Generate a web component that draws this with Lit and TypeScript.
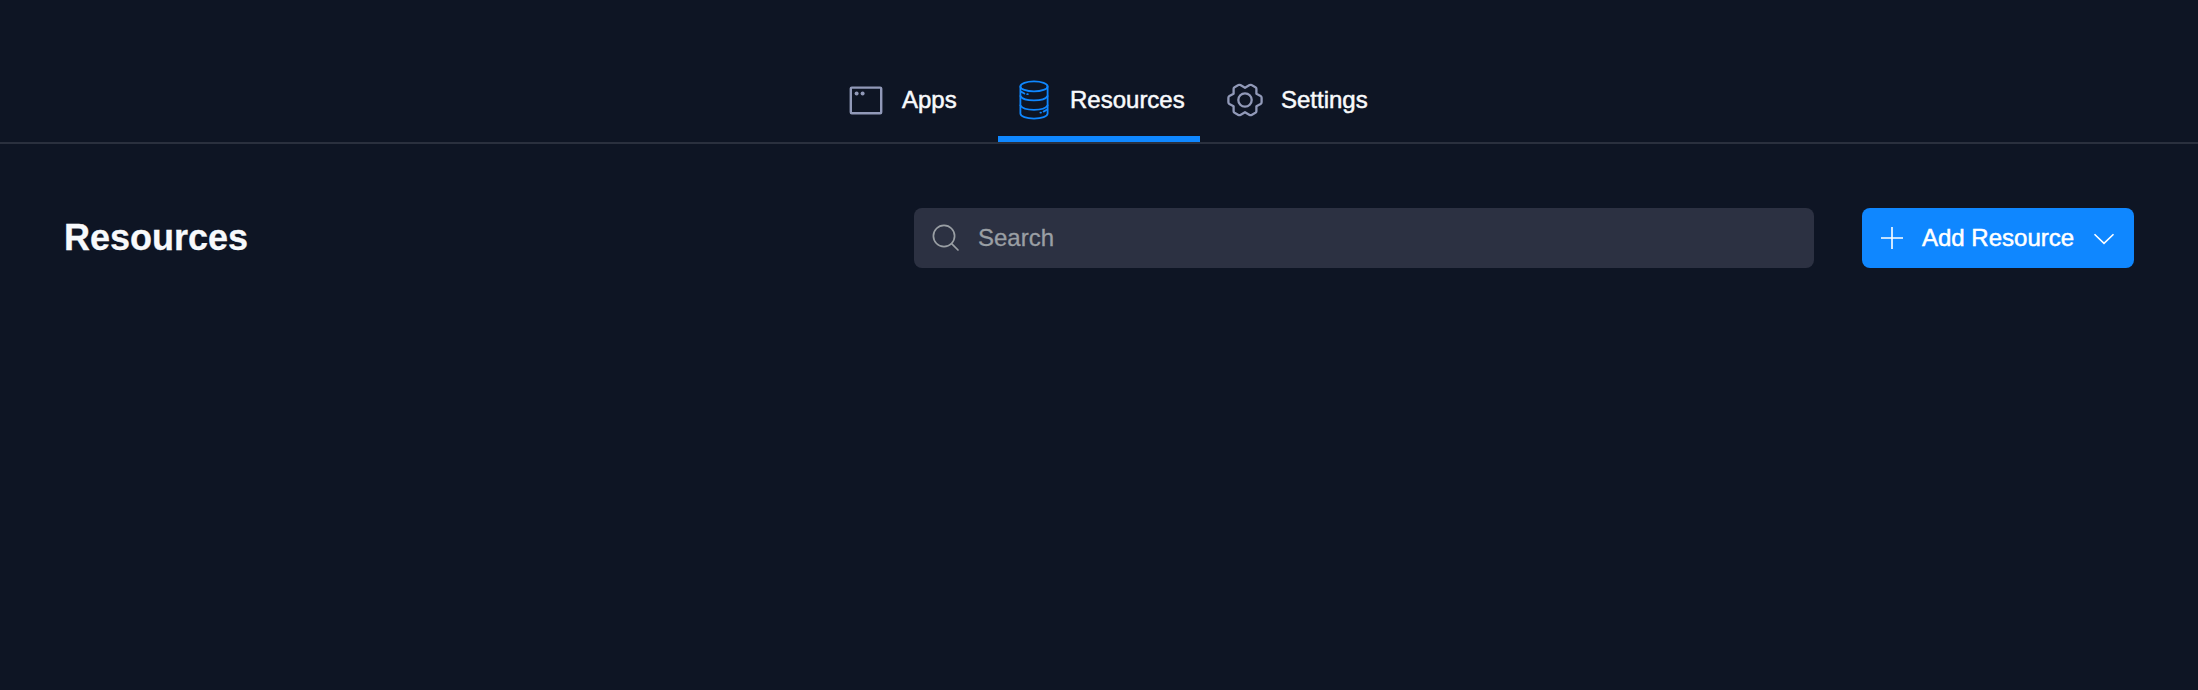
import { LitElement, html, css } from "lit";
import { customElement } from "lit/decorators.js";

const appsIcon = html`<svg width="34" height="29" viewBox="0 0 34 29" fill="none">
  <rect x="1.8" y="1.6" width="30.4" height="25.6" rx="1" stroke="currentColor" stroke-width="2.4"/>
  <circle cx="7.6" cy="7.6" r="2" fill="currentColor"/><circle cx="13.6" cy="7.6" r="2" fill="currentColor"/>
</svg>`;

const resourcesIcon = html`<svg width="30" height="40" viewBox="0 0 30 40" fill="none" stroke="currentColor" stroke-width="1.8" stroke-linecap="round">
  <ellipse cx="15" cy="6.4" rx="13.6" ry="5"/>
  <path d="M1.4 6.4V33.5C1.4 36.5 7.4 38.6 15 38.6S28.6 36.5 28.6 33.5V6.4"/>
  <path d="M1.4 16C3 18.8 8.5 20.4 15 20.4S27 18.8 28.6 16"/>
  <path d="M1.4 25.4C3 28.2 8.5 29.8 15 29.8S27 28.2 28.6 25.4"/>
  <path d="M2 11.6L5.4 13.5M8.2 14.2H8.8M28.2 29.5L24.6 31.6M22 32.6H21.4"/>
</svg>`;

const settingsIcon = html`<svg width="36" height="34" viewBox="0 0 36 34" fill="none" stroke="currentColor" stroke-width="2.3" stroke-linejoin="round">
  <path d="M18 4.8L22.6 2.1Q23.6 1.5 24.6 2.1L28.4 4.2Q29.4 4.8 29.4 5.8V10.8L33.6 13Q34.6 13.6 34.6 14.8V19.2Q34.6 20.4 33.6 21L29.4 23.2V28.2Q29.4 29.2 28.4 29.8L24.6 31.9Q23.6 32.5 22.6 31.9L18 29.2L13.4 31.9Q12.4 32.5 11.4 31.9L7.6 29.8Q6.6 29.2 6.6 28.2V23.2L2.4 21Q1.4 20.4 1.4 19.2V14.8Q1.4 13.6 2.4 13L6.6 10.8V5.8Q6.6 4.8 7.6 4.2L11.4 2.1Q12.4 1.5 13.4 2.1Z"/>
  <circle cx="18" cy="17" r="6.7"/>
</svg>`;

@customElement("app-root")
export class AppRoot extends LitElement {
  static styles = css`
    :host { display: block; min-height: 690px; background: #0e1524;
      color: #f8fafc; font: 24px/30px "Liberation Sans", Arial, sans-serif; }
    * { box-sizing: border-box; }
    svg { display: block; flex: none; }
    .nav { display: flex; height: 144px; padding: 56px 0 0 829px; border-bottom: 2px solid #2a303e; }
    .tab { display: flex; align-items: center; height: 86px; padding-top: 8px; border-bottom: 6px solid transparent; color: #9199b8; }
    .tab span { color: #f8fafc; }
    .apps { width: 169px; padding-left: 20px; }
    .apps span { margin-left: 19px; }
    .active { width: 202px; padding-left: 21px; border-color: #0f87ff; color: #0f87ff; }
    .active span { margin-left: 21px; }
    .settings { padding-left: 27px; }
    .settings span { margin-left: 18px; }
    .label { -webkit-text-stroke: 0.5px currentColor; }
    .bar { display: flex; align-items: center; padding: 64px 64px 0; }
    h1 { margin: 0; width: 850px; font-size: 36px; line-height: 44px; font-weight: 700; -webkit-text-stroke: 0.3px currentColor; }
    .search { display: flex; align-items: center; width: 900px; height: 60px; padding-left: 18px; gap: 18px;
      border-radius: 8px; background: #2c3142; color: #9a9fa4; }
    .search span { -webkit-text-stroke: 0.3px currentColor; }
    .add { display: flex; align-items: center; width: 272px; height: 60px; margin: 0 0 0 48px; padding: 0 0 0 18px;
      border: 0; border-radius: 8px; background: #0f87ff; color: #fff; font: inherit; }
    .add span { margin: 0 19px 0 18px; white-space: nowrap; }
  `;

  render() {
    return html`
      <nav class="nav">
        <div class="tab apps">${appsIcon}<span class="label">Apps</span></div>
        <div class="tab active">${resourcesIcon}<span class="label">Resources</span></div>
        <div class="tab settings">${settingsIcon}<span class="label">Settings</span></div>
      </nav>
      <main class="bar">
        <h1>Resources</h1>
        <div class="search">
          <svg width="28" height="28" viewBox="0 0 28 28" fill="none" stroke="currentColor" stroke-width="1.7" stroke-linecap="round"><circle cx="12" cy="12" r="10.6"/><path d="M19.6 19.6L26 26"/></svg>
          <span>Search</span>
        </div>
        <button class="add">
          <svg width="24" height="24" viewBox="0 0 24 24" fill="none" stroke="currentColor" stroke-width="1.6"><path d="M1 12H23M12 1V23"/></svg>
          <span class="label">Add Resource</span>
          <svg width="22" height="14" viewBox="0 0 22 14" fill="none" stroke="currentColor" stroke-width="1.6"><path d="M1.5 3.2L11 12.4L20.5 3.2"/></svg>
        </button>
      </main>`;
  }
}
